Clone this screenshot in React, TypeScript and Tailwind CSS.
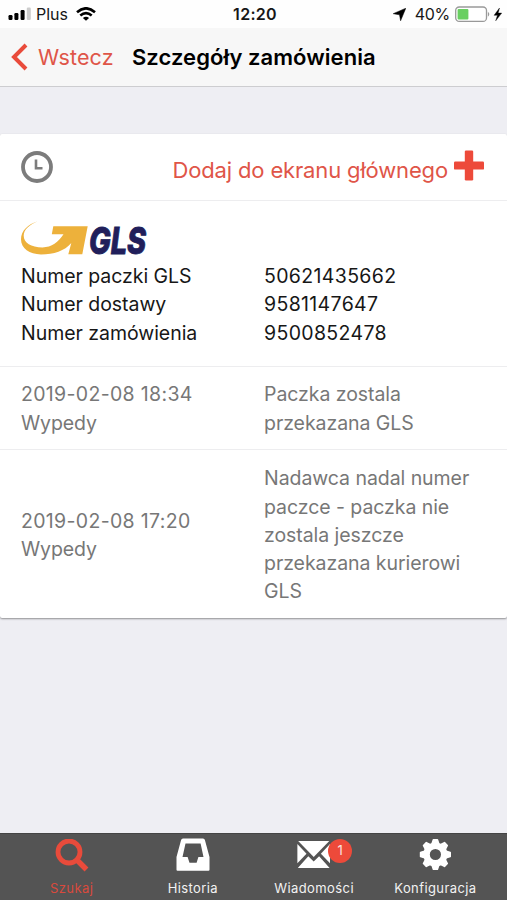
import type { ReactNode } from "react";

const history = [
  {
    date: "2019-02-08 18:34",
    place: "Wypedy",
    lines: ["Paczka zostala", "przekazana GLS"],
  },
  {
    date: "2019-02-08 17:20",
    place: "Wypedy",
    lines: ["Nadawca nadal numer", "paczce - paczka nie", "zostala jeszcze", "przekazana kurierowi", "GLS"],
  },
];

const numbers = [
  ["Numer paczki GLS", "50621435662"],
  ["Numer dostawy", "9581147647"],
  ["Numer zamówienia", "9500852478"],
];

function StatusBar() {
  return (
    <div className="grid h-7 grid-cols-3 items-center bg-[#fefefe] px-2 text-[#171717]">
      <div className="flex items-center">
        <svg width="23" height="14" viewBox="0 0 23 14">
          <rect x="0.5" y="8" width="4" height="5" rx="1.2" fill="#000" />
          <rect x="6.4" y="6" width="4" height="7" rx="1.2" fill="#000" />
          <rect x="12.6" y="3" width="4" height="10" rx="1.2" fill="#000" />
          <rect x="18.8" y="0.5" width="4" height="12.5" rx="1.2" fill="#ccc" />
        </svg>
        <span className="ml-[5px] text-[16px]">Plus</span>
        <svg className="ml-2" width="20" height="14" viewBox="0 0 20 14" fill="none" stroke="#000" strokeWidth="2.6">
          <path d="M1 5.2 Q10 -2.6 19 5.2" />
          <path d="M4.3 8.6 Q10 3.8 15.7 8.6" />
          <path d="M10 13.7 L6.9 10.9 Q10 8.4 13.1 10.9 Z" fill="#000" stroke="none" />
        </svg>
      </div>
      <div className="pl-[3px] text-center text-[16px] font-semibold tracking-[0.3px]">12:20</div>
      <div className="-mr-[3px] flex items-center justify-end">
        <svg width="13" height="13" viewBox="0 0 13 13">
          <path d="M12.8 0.2 L7.6 12.8 L6.5 6.8 L0.2 5.7 Z" fill="#000" stroke="#000" strokeWidth="0.5" />
        </svg>
        <span className="ml-[9px] text-[16px] tracking-[-0.3px]">40%</span>
        <svg className="ml-[5px]" width="47" height="17" viewBox="0.5 0 47 17">
          <rect x="1.2" y="1" width="30.8" height="14.4" rx="3.5" fill="#fff" stroke="#999" strokeWidth="1.3" />
          <rect x="3.1" y="3" width="10.8" height="10.4" rx="1" fill="#69cf61" />
          <path d="M33.4 5.7 Q36.2 8.2 33.4 10.7 Z" fill="#999" />
          <path d="M45 2 L39.6 9.3 H43 L41.2 14.8 L47.2 7.1 H43.6 Z" fill="#000" stroke="#000" strokeWidth="0.4" />
        </svg>
      </div>
    </div>
  );
}

function GlsLogo() {
  return (
    <svg className="block overflow-visible" width="134" height="38" viewBox="0 0 134 38">
      <path
        d="M17 0.3 C7 3 0 10 0 18.3 C0 27.5 8.5 33.4 20 33.4 C33 33.4 43.5 30 50.3 22 L47.3 33.3 H61.3 L66.7 5.3 H32.3 L30.8 13.3 H42.5 C37.5 21 30.5 26.4 21.5 26.4 C10 26.4 2.7 22 2.7 14.8 C2.7 8.5 8.5 3.8 17 0.3 Z"
        fill="#edb13b"
      />
      <text
        x="68"
        y="32.9"
        fill="#211f5b"
        stroke="#211f5b"
        strokeWidth="0.9"
        fontFamily="Inter, sans-serif"
        fontSize="36.5"
        fontWeight="800"
        fontStyle="italic"
        textLength="57"
        lengthAdjust="spacingAndGlyphs"
      >
        GLS
      </text>
    </svg>
  );
}

function Tab({ label, active = false, children }: { label: string; active?: boolean; children: ReactNode }) {
  return (
    <button
      className={
        active
          ? "flex flex-1 flex-col items-center pt-[5px] text-[#e94b3b]"
          : "flex flex-1 flex-col items-center pt-[5px] text-white"
      }
    >
      <span className="relative block h-[34px]">{children}</span>
      <span
        className={
          active
            ? "mt-[7px] text-[13px] leading-4 tracking-[0.4px] text-[#d94a3d]"
            : "mt-[7px] text-[13px] leading-4 tracking-[0.4px] text-[#f2f2f2]"
        }
      >
        {label}
      </span>
    </button>
  );
}

export default function App() {
  return (
    <div className="flex h-[900px] w-[507px] flex-col overflow-hidden bg-[#eeeef3] font-['Inter',sans-serif]">
      <StatusBar />
      <header className="flex h-[59px] items-center border-b border-[#cdcdd0] bg-[#f7f7f7] pl-[11px]">
        <svg width="17" height="28" viewBox="0 0 17 28" fill="none" stroke="#e94b3b" strokeWidth="4">
          <path d="M15 2 L3 14 L15 26" />
        </svg>
        <span className="ml-[10px] w-[94px] text-[21.5px] tracking-[0.1px] text-[#df5548]">Wstecz</span>
        <h1 className="whitespace-nowrap text-[22px] font-semibold tracking-[0.06px] text-black">Szczegóły zamówienia</h1>
      </header>

      <main className="flex-1 pt-[47px]">
        <section className="rounded-[2px] bg-white text-[19.5px] leading-[28.3px] shadow-[0_1px_2px_rgba(0,0,0,0.4)]">
          <div className="flex h-[67px] items-center justify-between border-b border-[#ededef] pr-[22px] pl-[21px]">
            <svg width="32" height="32" viewBox="0 0 32 32" fill="none" stroke="#7c7c7c">
              <circle cx="16" cy="16" r="14" strokeWidth="3.8" />
              <path d="M15 8.5 V17.3 H21.5" strokeWidth="2.6" />
            </svg>
            <button className="flex items-center text-[22px] text-[#df5548]">
              <span className="mt-[7px] whitespace-nowrap tracking-[-0.15px]">Dodaj do ekranu głównego</span>
              <svg className="mb-[3px] ml-[6px]" width="31" height="31" viewBox="0.5 0 31 31" fill="#ed4a3a">
                <rect x="11.3" y="0.5" width="8.4" height="30" rx="1.2" />
                <rect x="0.5" y="11.4" width="30" height="8.2" rx="1.2" />
              </svg>
            </button>
          </div>

          <div className="h-[166px] border-b border-[#ededef] pt-[20px] pl-[21px] text-[#171717]">
            <GlsLogo />
            <dl className="mt-[3px]">
              {numbers.map(([label, value]) => (
                <div key={label} className="flex">
                  <dt className="w-[243px] tracking-[-0.04px]">{label}</dt>
                  <dd className="tracking-[0.35px]">{value}</dd>
                </div>
              ))}
            </dl>
          </div>

          {history.map((event, i) => (
            <div
              key={event.date}
              className={
                i === 0
                  ? "flex h-[83px] items-center border-b border-[#ededef] pt-px pl-[21px] text-[#777]"
                  : "flex h-[168px] items-center pt-[2px] pl-[21px] text-[#777]"
              }
            >
              <div className="w-[243px]">
                <p className="tracking-[0.33px]">{event.date}</p>
                <p className="tracking-[-0.1px]">{event.place}</p>
              </div>
              <div className="whitespace-nowrap tracking-[-0.06px]">
                {event.lines.map((line) => (
                  <p key={line}>{line}</p>
                ))}
              </div>
            </div>
          ))}
        </section>
      </main>

      <nav className="flex h-[67px] border-t border-[#444] bg-[#545454] px-[11px]">
        <Tab label="Szukaj" active>
          <svg width="34" height="34" viewBox="0 0 34 34" fill="none" stroke="currentColor">
            <circle cx="14" cy="13" r="11" strokeWidth="4.8" />
            <path d="M21 20 L31.5 30.5" strokeWidth="5.4" />
          </svg>
        </Tab>
        <Tab label="Historia">
          <svg className="overflow-visible" width="34" height="34" viewBox="0 0 34 34">
            <path
              fill="currentColor"
              fillRule="evenodd"
              d="M7 -0.5 H27 Q28.5 -0.5 28.9 1 L33.5 18 V30.7 Q33.5 31.7 32.5 31.7 H1.5 Q0.5 31.7 0.5 30.7 V18 L5.1 1 Q5.5 -0.5 7 -0.5 Z M9.5 4.5 L6.5 18 H11.6 L13.5 23.8 H20.6 L22.4 18 H27.5 L24.6 4.5 Z"
            />
          </svg>
        </Tab>
        <Tab label="Wiadomości">
          <svg width="34" height="34" viewBox="0 0 34 34" fill="currentColor">
            <path d="M1.2 1.9 H32.3 L16.7 18 Z" />
            <path d="M0.4 4.9 L9.5 14.7 L0.4 24.2 Z" />
            <path d="M33 4.9 L23.9 14.7 L33 24.2 Z" />
            <path d="M0.8 28.9 L11.3 17.2 L16.7 22.6 L22.1 17.2 L32.6 28.9 Z" />
          </svg>
          <span className="absolute top-0 left-[31px] flex size-6 items-center justify-center rounded-full bg-[#ed4a3a] text-[13px] text-[#fbe3e0]">
            1
          </span>
        </Tab>
        <Tab label="Konfiguracja">
          <svg className="overflow-visible" width="34" height="34" viewBox="0 0 34 34">
            <g fill="currentColor" stroke="currentColor" strokeLinejoin="round" transform="translate(17.4 15.5)">
              {[0, 45, 90, 135, 180, 225, 270, 315].map((angle) => (
                <path key={angle} transform={`rotate(${angle})`} d="M-3.6 -10 L-2 -14.8 H2 L3.6 -10 Z" strokeWidth="1.6" />
              ))}
              <circle r="8.8" fill="none" strokeWidth="6.4" />
            </g>
          </svg>
        </Tab>
      </nav>
    </div>
  );
}
